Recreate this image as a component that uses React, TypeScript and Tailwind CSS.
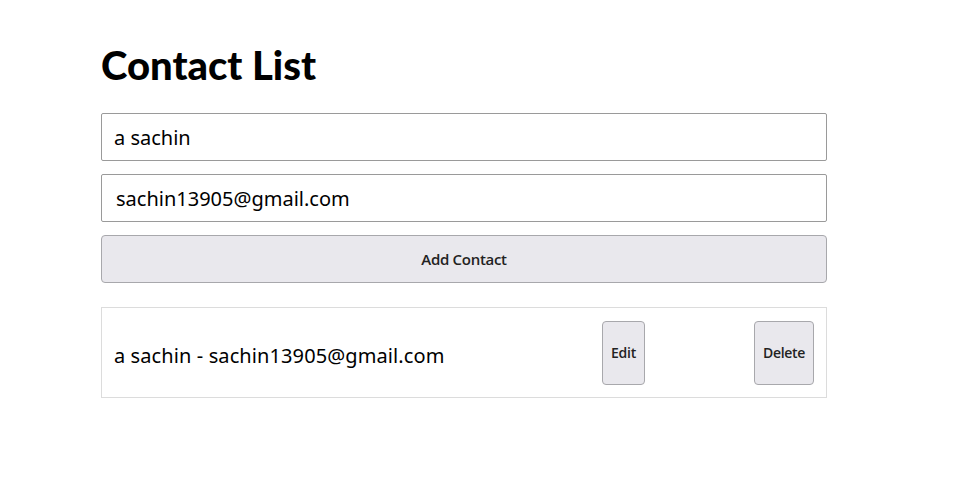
export default function App() {
  return (
    <div className="min-h-screen bg-white">
      <div className="w-[726px] ml-[101px] pt-[37px]">
        <h1 className="text-[40px] leading-[56px] font-black text-black font-['Lato',sans-serif]">
          Contact List
        </h1>
        <div className="mt-[20px] flex flex-col gap-[13px]">
          <input
            defaultValue="a sachin"
            className="h-[48px] w-full border border-[#9a9a9a] rounded-[2px] px-[12px] text-[20px] text-black font-['Noto_Sans',sans-serif] outline-none"
          />
          <input
            defaultValue="sachin13905@gmail.com"
            className="h-[48px] w-full border border-[#9a9a9a] rounded-[2px] px-[14px] text-[20px] text-black font-['Noto_Sans',sans-serif] outline-none"
          />
          <button className="h-[48px] w-full bg-[#e9e8ed] border border-[#a8a8ac] rounded-[4px] text-[15px] font-semibold text-[#222] font-['Open_Sans',sans-serif] tracking-[-0.3px]">
            Add Contact
          </button>
        </div>
        <ul className="mt-[24px]">
          <li className="h-[91px] border border-[#dcdcdc] flex items-center pl-[12px] pr-[12px]">
            <span className="flex-1 text-[20px] text-black font-['Noto_Sans',sans-serif] mt-[6px] tracking-[0.1px]">
              a sachin - sachin13905@gmail.com
            </span>
            <button className="ml-[1px] w-[43px] h-[64px] bg-[#e9e8ed] border border-[#a8a8ac] rounded-[4px] text-[14px] text-[#222] font-['Open_Sans',sans-serif] font-semibold tracking-[-0.3px]">
              Edit
            </button>
            <button className="ml-[109px] w-[60px] h-[64px] bg-[#e9e8ed] border border-[#a8a8ac] rounded-[4px] text-[14px] text-[#222] font-['Open_Sans',sans-serif] font-semibold tracking-[-0.3px]">
              Delete
            </button>
          </li>
        </ul>
      </div>
    </div>
  );
}
